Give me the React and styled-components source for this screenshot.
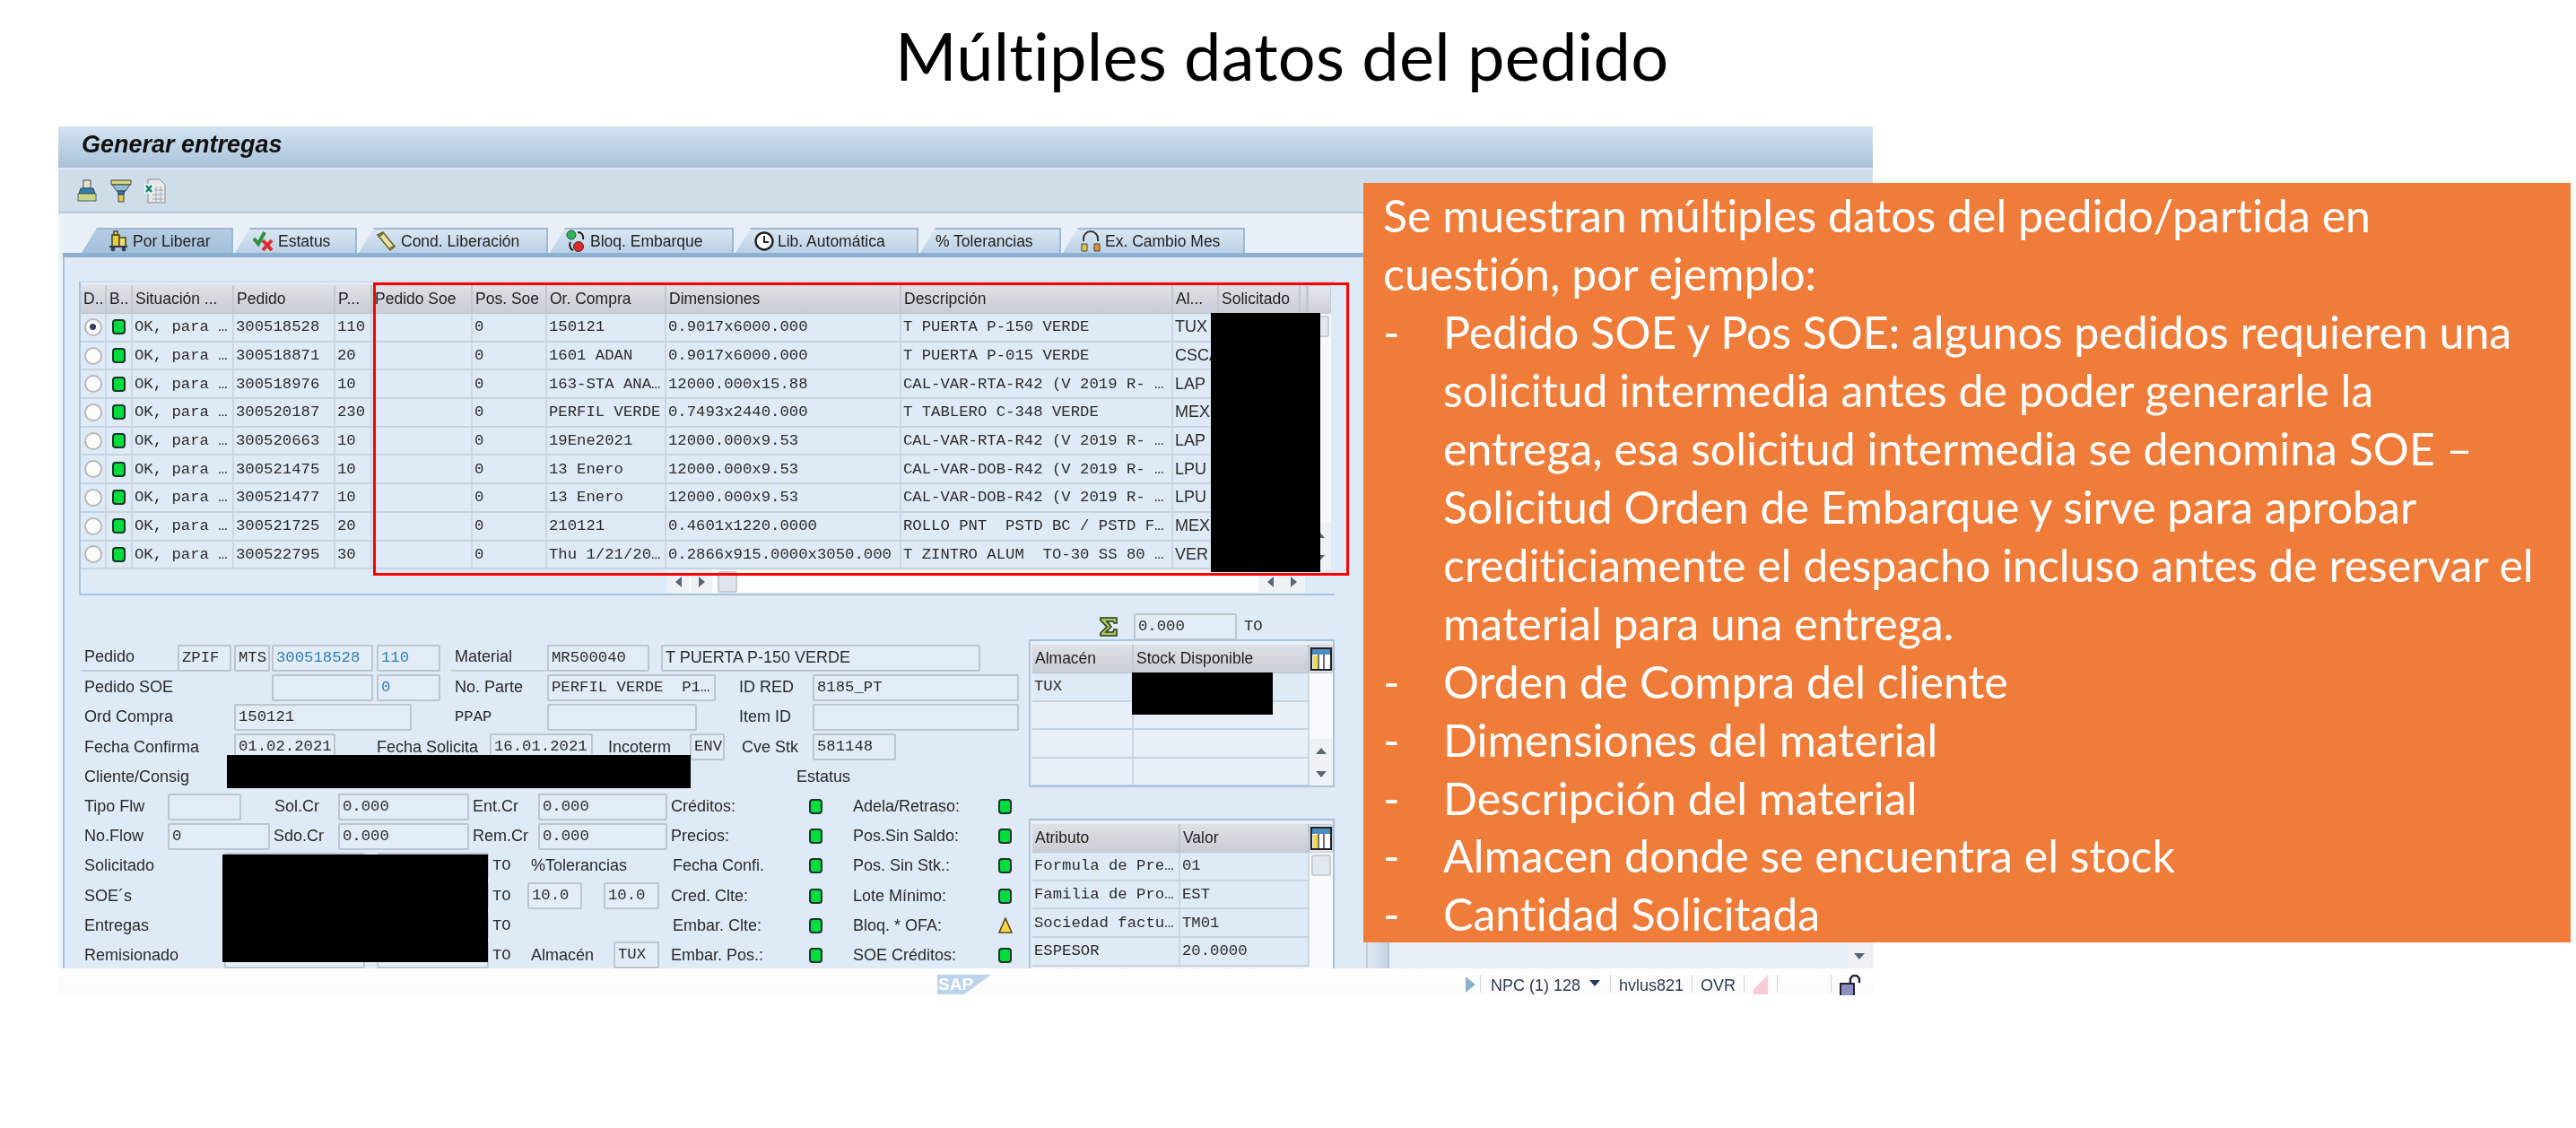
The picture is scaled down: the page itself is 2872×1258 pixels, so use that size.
import React from 'react';
import styled, { createGlobalStyle } from 'styled-components';

const GlobalStyle = createGlobalStyle`
  html, body { margin: 0; padding: 0; background: #fff; }
  * { box-sizing: border-box; }
`;

const SANS = `'Liberation Sans', Arial, sans-serif`;
const MONO = `'Liberation Mono', 'Courier New', monospace`;

const ORDERS = [
  ['300518528', '110', '150121', '0.9017x6000.000', 'T PUERTA P-150 VERDE', 'TUX'],
  ['300518871', '20', '1601 ADAN', '0.9017x6000.000', 'T PUERTA P-015 VERDE', 'CSCA'],
  ['300518976', '10', '163-STA ANA…', '12000.000x15.88', 'CAL-VAR-RTA-R42 (V 2019 R- …', 'LAP'],
  ['300520187', '230', 'PERFIL VERDE', '0.7493x2440.000', 'T TABLERO C-348 VERDE', 'MEX'],
  ['300520663', '10', '19Ene2021', '12000.000x9.53', 'CAL-VAR-RTA-R42 (V 2019 R- …', 'LAP'],
  ['300521475', '10', '13 Enero', '12000.000x9.53', 'CAL-VAR-DOB-R42 (V 2019 R- …', 'LPU'],
  ['300521477', '10', '13 Enero', '12000.000x9.53', 'CAL-VAR-DOB-R42 (V 2019 R- …', 'LPU'],
  ['300521725', '20', '210121', '0.4601x1220.0000', 'ROLLO PNT  PSTD BC / PSTD F…', 'MEX'],
  ['300522795', '30', 'Thu 1/21/20…', '0.2866x915.0000x3050.000', 'T ZINTRO ALUM  TO-30 SS 80 …', 'VER'],
];

const HEADERS = ['D..', 'B..', 'Situación ...', 'Pedido', 'P...', 'Pedido Soe', 'Pos. Soe', 'Or. Compra', 'Dimensiones', 'Descripción', 'Al...', 'Solicitado', ''];
const ORDER_COLS = '29px 29px 113px 113px 41px 112px 83px 133px 262px 303px 51px 91px 8px';

const Page = styled.div`
  position: relative;
  width: 2872px;
  height: 1258px;
  overflow: hidden;
  background: #fff;
`;

const Title = styled.h1`
  margin: 0;
  height: 141px;
  padding: 18px 0 0 998px;
  font: 400 74px/88px Lato, sans-serif;
  font-variant-ligatures: none;
  letter-spacing: 0.2px;
  color: #000;
  white-space: nowrap;
`;

const Window = styled.div`
  position: relative;
  width: 2023px;
  height: 939px;
  margin-left: 65px;
  display: flex;
  flex-direction: column;
  overflow: hidden;
  filter: blur(0.6px);
  font-family: ${SANS};
  color: #2a2a2a;
`;

const TitleBar = styled.div`
  height: 46px;
  padding: 5px 0 0 26px;
  background: linear-gradient(#d3e3f0, #a8c2da);
  font: italic 700 27px/30px ${SANS};
  color: #111;
`;

const Toolbar = styled.div`
  height: 51px;
  display: flex;
  align-items: center;
  gap: 14px;
  padding-left: 20px;
  background: #cfdde9;
  border-top: 2px solid #e0e9f1;
  border-bottom: 2px solid #b9c8d5;
`;

const Body = styled.div`
  flex: 1;
  display: flex;
  min-height: 0;
`;

const Main = styled.div`
  width: 1458px;
  padding-left: 5px;
  background: #edf2f8;
`;

const TabArea = styled.div`
  height: 49px;
  padding-top: 16px;
  background: #e9eff6;
  border-bottom: 5px solid #8fb1d1;
`;

const TabStrip = styled.div`
  display: flex;
  gap: 2px;
  margin-left: 21px;
`;

const Tab = styled.div`
  width: ${(p) => p.$w}px;
  height: 28px;
  display: flex;
  align-items: center;
  gap: 4px;
  padding-left: ${(p) => p.$pad}px;
  clip-path: polygon(17px 0, 100% 0, 100% 100%, 0 100%);
  background: ${(p) => (p.$active ? 'linear-gradient(#b5cde3, #a3bfda)' : 'linear-gradient(#dbe7f2, #b9d0e6)')};
  border-top: 2px solid #9db9d4;
  border-right: 2px solid #9db9d4;
  font: 17.5px/24px ${SANS};
  color: #222;
  white-space: nowrap;
`;

const Panel = styled.div`
  height: 793px;
  padding: 26px 0 0 16px;
  background: #deeaf5;
  border-left: 2px solid #a9c4de;
`;

const Frame = styled.div`
  width: 1400px;
  height: 351px;
  padding-top: 3px;
  border-top: 2px solid #d2dfea;
  border-left: 2px solid #a9c3dc;
  border-bottom: 2px solid #a9c3dc;
`;

const TableWrap = styled.div`
  display: flex;
`;

const Rows = styled.div`
  width: ${(p) => p.$w}px;
`;

const GridRow = styled.div`
  display: grid;
  grid-template-columns: ${(p) => p.$cols};
  height: ${(p) => p.$h}px;
  border-bottom: 2px solid #c7d3de;
`;

const HeadRow = styled(GridRow)`
  background: linear-gradient(#dee1e6, #c9cdd4);
  border-bottom: 1px solid #bcc4cd;
`;

const HeadCell = styled.div`
  padding: 0 0 0 3px;
  border-right: 2px solid #bfc8d2;
  font: 17.5px/${(p) => p.$h}px ${SANS};
  color: #222;
  white-space: nowrap;
  overflow: hidden;
`;

const Cell = styled.div`
  display: flex;
  align-items: center;
  justify-content: ${(p) => (p.$center ? 'center' : 'flex-start')};
  padding-left: ${(p) => (p.$center ? 0 : 2)}px;
  border-right: 2px solid #ccd7e2;
  font: ${(p) => (p.$sans ? `18px ${SANS}` : `17.3px ${MONO}`)};
  color: #2c2c2c;
  white-space: pre;
  overflow: hidden;
`;

const Radio = styled.span`
  width: 20px;
  height: 20px;
  display: flex;
  align-items: center;
  justify-content: center;
  border: 2px solid #b9b9b9;
  border-radius: 50%;
  background: #fbfbfb;
  &::after {
    content: '';
    width: 7px;
    height: 7px;
    border-radius: 50%;
    background: ${(p) => (p.$on ? '#33415c' : 'transparent')};
  }
`;

const Led = styled.span`
  flex: none;
  width: 15px;
  height: 17px;
  border: 2px solid #17352a;
  border-radius: 4px;
  background: #00de3e;
`;

const VScroll = styled.div`
  width: 26px;
  display: flex;
  flex-direction: column;
  background: #f7f9fc;
`;

const CornerBtn = styled.div`
  height: ${(p) => p.$h}px;
  display: flex;
  align-items: center;
  justify-content: center;
  background: ${(p) => p.$bg || 'linear-gradient(#e5e8ec, #ccd0d6)'};
  border: 1px solid #c3cad2;
  border-radius: 2px;
`;

const Thumb = styled.div`
  height: 24px;
  margin: 2px 2px 0;
  background: #e2e8f0;
  border: 2px solid #c7ced6;
  border-radius: 3px;
`;

const ScrollFill = styled.div`
  flex: 1;
`;

const ArrowBtn = styled.div`
  width: ${(p) => p.$w || 26}px;
  height: ${(p) => p.$h || 26}px;
  display: flex;
  align-items: center;
  justify-content: center;
  margin-left: ${(p) => p.$ml || 0}px;
  background: #eef2f7;
  &::after {
    content: '';
    border-style: solid;
    border-color: transparent;
    ${(p) => p.$dir === 'up' && 'border-width: 0 6px 7px; border-bottom-color: #5a6672;'}
    ${(p) => p.$dir === 'down' && 'border-width: 7px 6px 0; border-top-color: #5a6672;'}
    ${(p) => p.$dir === 'left' && 'border-width: 6px 7px 6px 0; border-right-color: #5a6672;'}
    ${(p) => p.$dir === 'right' && 'border-width: 6px 0 6px 7px; border-left-color: #5a6672;'}
  }
`;

const HScroll = styled.div`
  width: 711px;
  height: 25px;
  margin: 1px 0 0 654px;
  display: flex;
  align-items: center;
  background: #fbfcfe;
`;

const HThumb = styled.div`
  width: 22px;
  height: 24px;
  margin-left: 6px;
  background: #dfe5ec;
  border: 2px solid #c5ccd4;
  border-radius: 3px;
`;

const Lower = styled.div`
  display: flex;
  margin: 20px 0 0 2px;
`;

const FormCol = styled.div`
  width: 1057px;
  padding-top: 33px;
`;

const FormRow = styled.div`
  height: 33.2px;
  display: flex;
  align-items: center;
`;

const Lbl = styled.span`
  flex: none;
  width: ${(p) => p.$w}px;
  margin-left: ${(p) => p.$ml || 0}px;
  padding-left: 4px;
  font: ${(p) => (p.$mono ? `17.3px ${MONO}` : `18px ${SANS}`)};
  line-height: 29px;
  white-space: nowrap;
  color: #2a2a2a;
  border-bottom: ${(p) => (p.$line ? '2px solid #c3ced9' : 'none')};
`;

const Fld = styled.span`
  flex: none;
  width: ${(p) => p.$w}px;
  height: 30px;
  margin-left: ${(p) => p.$ml || 0}px;
  padding-left: 3px;
  background: #e2ecf6;
  border: 2px solid #bcc6cf;
  border-radius: 2px;
  font: ${(p) => (p.$sans ? `18px ${SANS}` : `17.3px ${MONO}`)};
  line-height: 25px;
  white-space: pre;
  overflow: hidden;
  color: ${(p) => (p.$blue ? '#2f7fb8' : '#2c2c2c')};
`;

const SideCol = styled.div`
  width: 341px;
`;

const SigmaRow = styled.div`
  height: 29px;
  display: flex;
  align-items: center;
  padding-left: 78px;
`;

const SigmaFld = styled(Fld)`
  margin-left: 17px;
`;

const ToText = styled.span`
  margin-left: 8px;
  font: 17.3px ${MONO};
`;

const MiniFrame = styled.div`
  height: ${(p) => p.$h}px;
  margin-top: ${(p) => p.$mt || 0}px;
  padding: 4px 0 0 2px;
  display: flex;
  background: #e8eff7;
  border: 2px solid #a9c3dc;
  ${(p) => p.$open && 'border-bottom: none;'}
  overflow: hidden;
`;

const LightRow = styled(GridRow)`
  background: ${(p) => (p.$tint ? '#deeaf5' : 'transparent')};
`;

const Callout = styled.div`
  position: absolute;
  left: 1520px;
  top: 204px;
  width: 1346px;
  height: 847px;
  padding: 4px 0 0 22px;
  background: #f07c39;
  font: 400 50px/64.95px Lato, sans-serif;
  font-variant-ligatures: none;
  color: #fff;
  white-space: nowrap;
`;

const CalloutItem = styled.div`
  display: flex;
`;

const Dash = styled.span`
  width: 67px;
`;

const RedBox = styled.div`
  position: absolute;
  left: 416px;
  top: 315px;
  width: 1088px;
  height: 327px;
  border: 3px solid #ff0000;
`;

const Redact = styled.div`
  position: absolute;
  left: ${(p) => p.$x - 65}px;
  top: ${(p) => p.$y - 141}px;
  width: ${(p) => p.$w}px;
  height: ${(p) => p.$h}px;
  background: #000;
`;

const Rail = styled.div`
  width: 26px;
  background: linear-gradient(90deg, #dfe9f3, #c6d5e3);
  border-left: 2px solid #c2cdd8;
  border-right: 2px solid #b0c6dc;
`;

const SideArea = styled.div`
  flex: 1;
  display: flex;
  flex-direction: column;
  justify-content: flex-end;
  align-items: flex-end;
  padding: 0 2px 1px 0;
  background: #e7eef6;
`;

const StatusBar = styled.div`
  width: 2023px;
  height: 30px;
  margin-left: 65px;
  padding-top: 7px;
  display: flex;
  align-items: flex-start;
  overflow: hidden;
  filter: blur(0.6px);
  font: 18px/24px ${SANS};
  color: #2c3a55;
  background: linear-gradient(#fff, #fafafa 90%, #fff);
`;

const SapLogo = styled.div`
  width: 60px;
  height: 22px;
  margin-left: 980px;
  padding-left: 1px;
  clip-path: polygon(0 0, 100% 0, 50% 100%, 0 100%);
  background: #bcd5ee;
  font: 700 19px/22px ${SANS};
  color: #fff;
`;

const StatusItem = styled.span`
  margin-left: ${(p) => p.$ml}px;
  white-space: nowrap;
`;

const Sep = styled.span`
  flex: none;
  width: 1px;
  height: 20px;
  margin-left: ${(p) => p.$ml}px;
  background: #d0d4da;
`;

const PlayMark = styled.span`
  width: 0;
  height: 0;
  margin: 2px 0 0 ${(p) => p.$ml}px;
  border-style: solid;
  border-width: 9px 0 9px 11px;
  border-color: transparent transparent transparent #8fb0cc;
`;

const DownMark = styled.span`
  width: 0;
  height: 0;
  margin: 6px 0 0 ${(p) => p.$ml}px;
  border-style: solid;
  border-width: 7px 6px 0;
  border-color: #223a6b transparent transparent;
`;

const PinkMark = styled.span`
  width: 16px;
  height: 22px;
  margin-left: ${(p) => p.$ml}px;
  background: linear-gradient(135deg, #fff 40%, #f7ccd4 45%);
`;

const PrintIcon = () => (
  <svg width="24" height="26" viewBox="0 0 24 26">
    <path d="M8 1h8v9H8z" fill="#e8e4cc" stroke="#444" />
    <path d="M5 10h14l2 6H3z" fill="#2f7fb5" stroke="#345" />
    <path d="M2 16h20v8H2z" fill="#c8d68a" stroke="#465" />
  </svg>
);

const FilterIcon = () => (
  <svg width="24" height="26" viewBox="0 0 24 26">
    <path d="M1 1h22v5H1z" fill="#d8d27a" stroke="#444" />
    <path d="M2 6h20l-5 7H7z" fill="#8fc0d8" stroke="#444" />
    <path d="M8 13h8l-1 4H9z" fill="#2d78b0" stroke="#345" />
    <path d="M9 17h6v8H9z" fill="#e4c94a" stroke="#444" />
  </svg>
);

const ExcelIcon = () => (
  <svg width="24" height="28" viewBox="0 0 24 28">
    <path d="M4 1h13l6 6v20H4z" fill="#e6e8ea" stroke="#8a8f95" />
    <path d="M9 13h12M9 18h12M9 23h12M13 9v17M18 9v17" stroke="#a7abb0" fill="none" />
    <path d="M0 6h11v11H0z" fill="#e6f2ee" />
    <path d="M2 8l6 7M8 8l-6 7" stroke="#0e7f63" strokeWidth="2.4" />
  </svg>
);

const TruckIcon = () => (
  <svg width="23" height="24" viewBox="0 0 23 24">
    <path d="M4 5h8v13H4z" fill="#e5cf3c" stroke="#4a4420" strokeWidth="1.5" />
    <path d="M6 1h4v4H6zM12 8h7v10h-7z" fill="#efe070" stroke="#4a4420" strokeWidth="1.5" />
    <path d="M1 18h20" stroke="#335" strokeWidth="2" />
    <circle cx="5" cy="21" r="2.4" fill="#345" />
    <circle cx="17" cy="21" r="2.4" fill="#345" />
  </svg>
);

const StatusIcon = () => (
  <svg width="24" height="24" viewBox="0 0 24 24">
    <path d="M1 9l5 6L13 2" fill="none" stroke="#2f8f43" strokeWidth="4" />
    <path d="M11 11l10 11M21 11L11 22" stroke="#e22a2a" strokeWidth="4" />
  </svg>
);

const ScrollIcon = () => (
  <svg width="24" height="24" viewBox="0 0 24 24">
    <path d="M2 5l6-3 13 16-5 4z" fill="#ece09e" stroke="#6a6233" strokeWidth="1.5" />
    <path d="M2 5c2 2 5 1 6-3M16 22c-1-2 1-4 5-4" fill="none" stroke="#6a6233" strokeWidth="1.5" />
  </svg>
);

const NodesIcon = () => (
  <svg width="24" height="26" viewBox="0 0 24 26">
    <circle cx="7" cy="6" r="5" fill="#2fb25a" stroke="#24523a" />
    <circle cx="15" cy="19" r="5.5" fill="#dd2b2b" stroke="#5a1f1f" />
    <path d="M14 3c5 0 7 4 6 8M6 14c-2 4 0 8 3 9" fill="none" stroke="#222" strokeWidth="2" />
  </svg>
);

const ClockIcon = () => (
  <svg width="22" height="26" viewBox="0 0 22 26">
    <circle cx="11" cy="13" r="9.5" fill="#fff" stroke="#222" strokeWidth="2.4" />
    <path d="M11 7v7h5" fill="none" stroke="#222" strokeWidth="2" />
  </svg>
);

const HeadsetIcon = () => (
  <svg width="24" height="26" viewBox="0 0 24 26">
    <path d="M4 13V10a8 8 0 0 1 16 0v3" fill="none" stroke="#333" strokeWidth="2" />
    <path d="M2 16h6v8H2z" fill="#e5c83c" stroke="#444" />
    <path d="M16 16h6v8h-6z" fill="#e98a22" stroke="#444" />
  </svg>
);

const SigmaIcon = () => (
  <svg width="22" height="24" viewBox="0 0 22 24">
    <path d="M2 2h18v6h-3l-1-2H9l5 6-6 6h8l1-3h3v7H2v-3l7-7-7-7z" fill="#a7c95a" stroke="#2c3a20" strokeWidth="1.6" />
  </svg>
);

const ConfigIcon = () => (
  <svg width="24" height="26" viewBox="0 0 24 26">
    <path d="M1 1h22v24H1z" fill="#fff" stroke="#222" strokeWidth="2" />
    <path d="M2 2h20v6H2z" fill="#4a8cc4" />
    <path d="M3 9h5v15H3z" fill="#f2dc4e" />
    <path d="M9 8v16M15 8v16" stroke="#444" strokeWidth="1.5" />
  </svg>
);

const LockIcon = () => (
  <svg width="26" height="24" viewBox="0 0 26 24">
    <path d="M13 9V6a5 5 0 0 1 10 0v3" fill="none" stroke="#223" strokeWidth="2.4" />
    <path d="M2 10h15v14H2z" fill="#8c8fc4" stroke="#223" strokeWidth="2" />
  </svg>
);

const WarnIcon = () => (
  <svg width="16" height="18" viewBox="0 0 16 18">
    <path d="M8 1l7 16H1z" fill="#f7d84a" stroke="#5a4a14" strokeWidth="1.6" />
  </svg>
);

const ledPair = (right) => (
  <>
    <Led />
    <Lbl $w={166} $ml={30}>{right}</Lbl>
    <Led />
  </>
);

const HiddenQty = ({ label }) => (
  <>
    <Lbl $w={160}>{label}</Lbl>
    <Fld $w={157} />
    <Fld $w={125} $ml={13} />
    <Lbl $w={43} $mono>TO</Lbl>
  </>
);

const App = () => (
  <Page>
    <GlobalStyle />
    <Title>Múltiples datos del pedido</Title>

    <Window>
      <TitleBar>Generar entregas</TitleBar>
      <Toolbar>
        <PrintIcon />
        <FilterIcon />
        <ExcelIcon />
      </Toolbar>
      <Body>
        <Main>
          <TabArea>
            <TabStrip>
              <Tab $w={169} $pad={30} $active><TruckIcon />Por Liberar</Tab>
              <Tab $w={136} $pad={20}><StatusIcon />Estatus</Tab>
              <Tab $w={211} $pad={19}><ScrollIcon />Cond. Liberación</Tab>
              <Tab $w={205} $pad={17}><NodesIcon />Bloq. Embarque</Tab>
              <Tab $w={204} $pad={21}><ClockIcon />Lib. Automática</Tab>
              <Tab $w={157} $pad={17}>% Tolerancias</Tab>
              <Tab $w={203} $pad={19}><HeadsetIcon />Ex. Cambio Mes</Tab>
            </TabStrip>
          </TabArea>

          <Panel>
            <Frame>
              <TableWrap>
                <Rows $w={1368}>
                  <HeadRow $cols={ORDER_COLS} $h={32}>
                    {HEADERS.map((h, i) => <HeadCell key={i} $h={31}>{h}</HeadCell>)}
                  </HeadRow>
                  {ORDERS.map((o, i) => (
                    <GridRow key={o[0]} $cols={ORDER_COLS} $h={31.7}>
                      <Cell $center><Radio $on={i === 0} /></Cell>
                      <Cell $center><Led /></Cell>
                      <Cell>OK, para …</Cell>
                      <Cell>{o[0]}</Cell>
                      <Cell>{o[1]}</Cell>
                      <Cell />
                      <Cell>0</Cell>
                      <Cell>{o[2]}</Cell>
                      <Cell>{o[3]}</Cell>
                      <Cell>{o[4]}</Cell>
                      <Cell $sans>{o[5]}</Cell>
                      <Cell />
                      <Cell />
                    </GridRow>
                  ))}
                </Rows>
                <VScroll>
                  <CornerBtn $h={32} />
                  <Thumb />
                  <ScrollFill />
                  <ArrowBtn $dir="up" />
                  <ArrowBtn $dir="down" />
                </VScroll>
              </TableWrap>
              <HScroll>
                <ArrowBtn $dir="left" $w={24} $h={25} />
                <ArrowBtn $dir="right" $w={24} $h={25} $ml={2} />
                <HThumb />
                <ScrollFill />
                <ArrowBtn $dir="left" $w={26} $h={25} />
                <ArrowBtn $dir="right" $w={26} $h={25} />
              </HScroll>
            </Frame>

            <Lower>
              <FormCol>
                <FormRow>
                  <Lbl $w={108} $line>Pedido</Lbl>
                  <Fld $w={60}>ZPIF</Fld>
                  <Fld $w={40} $ml={3}>MTS</Fld>
                  <Fld $w={113} $ml={2} $blue>300518528</Fld>
                  <Fld $w={71} $ml={4} $blue>110</Fld>
                  <Lbl $w={107} $ml={12} $line>Material</Lbl>
                  <Fld $w={114}>MR500040</Fld>
                  <Fld $w={356} $ml={13} $sans>T PUERTA P-150 VERDE</Fld>
                </FormRow>
                <FormRow>
                  <Lbl $w={213}>Pedido SOE</Lbl>
                  <Fld $w={113} />
                  <Fld $w={71} $ml={4} $blue>0</Fld>
                  <Lbl $w={107} $ml={12}>No. Parte</Lbl>
                  <Fld $w={188}>PERFIL VERDE  P1…</Fld>
                  <Lbl $w={86} $ml={22}>ID RED</Lbl>
                  <Fld $w={230}>8185_PT</Fld>
                </FormRow>
                <FormRow>
                  <Lbl $w={171}>Ord Compra</Lbl>
                  <Fld $w={198}>150121</Fld>
                  <Lbl $w={107} $ml={44} $mono>PPAP</Lbl>
                  <Fld $w={167} />
                  <Lbl $w={86} $ml={43}>Item ID</Lbl>
                  <Fld $w={230} />
                </FormRow>
                <FormRow>
                  <Lbl $w={171}>Fecha Confirma</Lbl>
                  <Fld $w={113}>01.02.2021</Fld>
                  <Lbl $w={130} $ml={42}>Fecha Solicita</Lbl>
                  <Fld $w={115}>16.01.2021</Fld>
                  <Lbl $w={95} $ml={13}>Incoterm</Lbl>
                  <Fld $w={39}>ENV</Fld>
                  <Lbl $w={83} $ml={15}>Cve Stk</Lbl>
                  <Fld $w={93}>581148</Fld>
                </FormRow>
                <FormRow>
                  <Lbl $w={794}>Cliente/Consig</Lbl>
                  <Lbl $w={100}>Estatus</Lbl>
                </FormRow>
                <FormRow>
                  <Lbl $w={97}>Tipo Flw</Lbl>
                  <Fld $w={82} />
                  <Lbl $w={75} $ml={33}>Sol.Cr</Lbl>
                  <Fld $w={146}>0.000</Fld>
                  <Lbl $w={77}>Ent.Cr</Lbl>
                  <Fld $w={144}>0.000</Fld>
                  <Lbl $w={158}>Créditos:</Lbl>
                  {ledPair('Adela/Retraso:')}
                </FormRow>
                <FormRow>
                  <Lbl $w={97}>No.Flow</Lbl>
                  <Fld $w={114}>0</Fld>
                  <Lbl $w={76}>Sdo.Cr</Lbl>
                  <Fld $w={146}>0.000</Fld>
                  <Lbl $w={77}>Rem.Cr</Lbl>
                  <Fld $w={144}>0.000</Fld>
                  <Lbl $w={158}>Precios:</Lbl>
                  {ledPair('Pos.Sin Saldo:')}
                </FormRow>
                <FormRow>
                  <HiddenQty label="Solicitado" />
                  <Lbl $w={158}>%Tolerancias</Lbl>
                  <Lbl $w={156}>Fecha Confi.</Lbl>
                  {ledPair('Pos. Sin Stk.:')}
                </FormRow>
                <FormRow>
                  <HiddenQty label="SOE´s" />
                  <Fld $w={61}>10.0</Fld>
                  <Fld $w={62} $ml={24}>10.0</Fld>
                  <Lbl $w={158} $ml={9}>Cred. Clte:</Lbl>
                  {ledPair('Lote Mínimo:')}
                </FormRow>
                <FormRow>
                  <HiddenQty label="Entregas" />
                  <Lbl $w={158} />
                  <Lbl $w={156}>Embar. Clte:</Lbl>
                  <Led />
                  <Lbl $w={166} $ml={30}>Bloq. * OFA:</Lbl>
                  <WarnIcon />
                </FormRow>
                <FormRow>
                  <HiddenQty label="Remisionado" />
                  <Lbl $w={96}>Almacén</Lbl>
                  <Fld $w={51}>TUX</Fld>
                  <Lbl $w={158} $ml={9}>Embar. Pos.:</Lbl>
                  {ledPair('SOE Créditos:')}
                </FormRow>
              </FormCol>

              <SideCol>
                <SigmaRow>
                  <SigmaIcon />
                  <SigmaFld $w={115}>0.000</SigmaFld>
                  <ToText>TO</ToText>
                </SigmaRow>
                <MiniFrame $h={165}>
                  <Rows $w={309}>
                    <HeadRow $cols="113px 196px" $h={32}>
                      <HeadCell $h={31}>Almacén</HeadCell>
                      <HeadCell $h={31}>Stock Disponible</HeadCell>
                    </HeadRow>
                    <LightRow $cols="113px 196px" $h={31.5} $tint>
                      <Cell>TUX</Cell><Cell />
                    </LightRow>
                    <LightRow $cols="113px 196px" $h={31.5}><Cell /><Cell /></LightRow>
                    <LightRow $cols="113px 196px" $h={31.5}><Cell /><Cell /></LightRow>
                    <LightRow $cols="113px 196px" $h={31.5}><Cell /><Cell /></LightRow>
                  </Rows>
                  <VScroll>
                    <CornerBtn $h={32} $bg="#dfe5ec"><ConfigIcon /></CornerBtn>
                    <ScrollFill />
                    <ArrowBtn $dir="up" />
                    <ArrowBtn $dir="down" />
                  </VScroll>
                </MiniFrame>
                <MiniFrame $h={180} $mt={35} $open>
                  <Rows $w={309}>
                    <HeadRow $cols="165px 144px" $h={32}>
                      <HeadCell $h={31}>Atributo</HeadCell>
                      <HeadCell $h={31}>Valor</HeadCell>
                    </HeadRow>
                    <LightRow $cols="165px 144px" $h={31.7} $tint>
                      <Cell>Formula de Pre…</Cell><Cell>01</Cell>
                    </LightRow>
                    <LightRow $cols="165px 144px" $h={31.7} $tint>
                      <Cell>Familia de Pro…</Cell><Cell>EST</Cell>
                    </LightRow>
                    <LightRow $cols="165px 144px" $h={31.7} $tint>
                      <Cell>Sociedad factu…</Cell><Cell>TM01</Cell>
                    </LightRow>
                    <LightRow $cols="165px 144px" $h={31.7} $tint>
                      <Cell>ESPESOR</Cell><Cell>20.0000</Cell>
                    </LightRow>
                  </Rows>
                  <VScroll>
                    <CornerBtn $h={32} $bg="#dfe5ec"><ConfigIcon /></CornerBtn>
                    <Thumb />
                    <ScrollFill />
                  </VScroll>
                </MiniFrame>
              </SideCol>
            </Lower>
          </Panel>
        </Main>
        <Rail />
        <SideArea>
          <ArrowBtn $dir="down" />
        </SideArea>
      </Body>

      <Redact $x={1350} $y={349} $w={122} $h={289} />
      <Redact $x={253} $y={842} $w={517} $h={37} />
      <Redact $x={248} $y={953} $w={296} $h={120} />
      <Redact $x={1262} $y={750} $w={157} $h={47} />
    </Window>

    <StatusBar>
      <SapLogo>SAP</SapLogo>
      <PlayMark $ml={529} />
      <Sep $ml={5} />
      <StatusItem $ml={11}>NPC (1) 128</StatusItem>
      <DownMark $ml={10} />
      <Sep $ml={11} />
      <StatusItem $ml={9}>hvlus821</StatusItem>
      <Sep $ml={9} />
      <StatusItem $ml={9}>OVR</StatusItem>
      <Sep $ml={9} />
      <PinkMark $ml={10} />
      <Sep $ml={10} />
      <Sep $ml={59} />
      <StatusItem $ml={8}><LockIcon /></StatusItem>
    </StatusBar>

    <RedBox />

    <Callout>
      Se muestran múltiples datos del pedido/partida en<br />
      cuestión, por ejemplo:
      <CalloutItem>
        <Dash>-</Dash>
        <span>
          Pedido SOE y Pos SOE: algunos pedidos requieren una<br />
          solicitud intermedia antes de poder generarle la<br />
          entrega, esa solicitud intermedia se denomina SOE –<br />
          Solicitud Orden de Embarque y sirve para aprobar<br />
          crediticiamente el despacho incluso antes de reservar el<br />
          material para una entrega.
        </span>
      </CalloutItem>
      <CalloutItem><Dash>-</Dash><span>Orden de Compra del cliente</span></CalloutItem>
      <CalloutItem><Dash>-</Dash><span>Dimensiones del material</span></CalloutItem>
      <CalloutItem><Dash>-</Dash><span>Descripción del material</span></CalloutItem>
      <CalloutItem><Dash>-</Dash><span>Almacen donde se encuentra el stock</span></CalloutItem>
      <CalloutItem><Dash>-</Dash><span>Cantidad Solicitada</span></CalloutItem>
    </Callout>
  </Page>
);

export default App;
